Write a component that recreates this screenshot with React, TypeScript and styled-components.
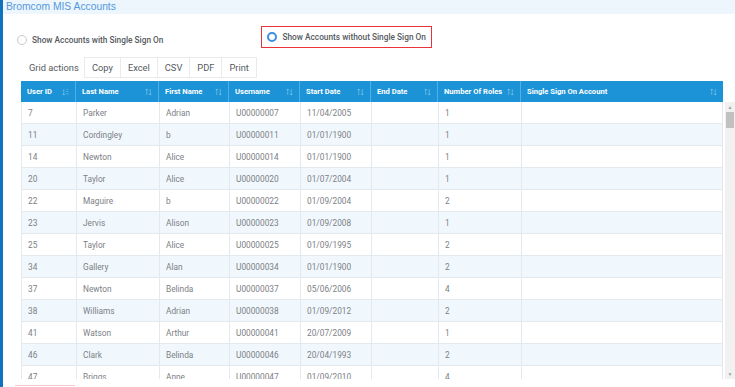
import React from 'react';
import styled, { createGlobalStyle } from 'styled-components';

const GlobalStyle = createGlobalStyle`
  html, body {
    margin: 0;
    padding: 0;
    background: #ffffff;
    font-family: Roboto, "Liberation Sans", Arial, sans-serif;
    overflow: hidden;
  }
`;

interface Account {
  id: number;
  lastName: string;
  firstName: string;
  username: string;
  startDate: string;
  endDate: string;
  roles: number;
  sso: string;
}

const accounts: Account[] = [
  { id: 7, lastName: 'Parker', firstName: 'Adrian', username: 'U00000007', startDate: '11/04/2005', endDate: '', roles: 1, sso: '' },
  { id: 11, lastName: 'Cordingley', firstName: 'b', username: 'U00000011', startDate: '01/01/1900', endDate: '', roles: 1, sso: '' },
  { id: 14, lastName: 'Newton', firstName: 'Alice', username: 'U00000014', startDate: '01/01/1900', endDate: '', roles: 1, sso: '' },
  { id: 20, lastName: 'Taylor', firstName: 'Alice', username: 'U00000020', startDate: '01/07/2004', endDate: '', roles: 1, sso: '' },
  { id: 22, lastName: 'Maguire', firstName: 'b', username: 'U00000022', startDate: '01/09/2004', endDate: '', roles: 2, sso: '' },
  { id: 23, lastName: 'Jervis', firstName: 'Alison', username: 'U00000023', startDate: '01/09/2008', endDate: '', roles: 1, sso: '' },
  { id: 25, lastName: 'Taylor', firstName: 'Alice', username: 'U00000025', startDate: '01/09/1995', endDate: '', roles: 2, sso: '' },
  { id: 34, lastName: 'Gallery', firstName: 'Alan', username: 'U00000034', startDate: '01/01/1900', endDate: '', roles: 2, sso: '' },
  { id: 37, lastName: 'Newton', firstName: 'Belinda', username: 'U00000037', startDate: '05/06/2006', endDate: '', roles: 4, sso: '' },
  { id: 38, lastName: 'Williams', firstName: 'Adrian', username: 'U00000038', startDate: '01/09/2012', endDate: '', roles: 2, sso: '' },
  { id: 41, lastName: 'Watson', firstName: 'Arthur', username: 'U00000041', startDate: '20/07/2009', endDate: '', roles: 1, sso: '' },
  { id: 46, lastName: 'Clark', firstName: 'Belinda', username: 'U00000046', startDate: '20/04/1993', endDate: '', roles: 2, sso: '' },
  { id: 47, lastName: 'Briggs', firstName: 'Anne', username: 'U00000047', startDate: '01/09/2010', endDate: '', roles: 4, sso: '' },
];

const columns = [
  { label: 'User ID', width: 55, sorted: true },
  { label: 'Last Name', width: 83 },
  { label: 'First Name', width: 70 },
  { label: 'Username', width: 71 },
  { label: 'Start Date', width: 71 },
  { label: 'End Date', width: 67 },
  { label: 'Number Of Roles', width: 83 },
  { label: 'Single Sign On Account', width: 202 },
];

const gridActions = ['Copy', 'Excel', 'CSV', 'PDF', 'Print'];

const SortIcon: React.FC<{ sorted?: boolean }> = ({ sorted }) => (
  <svg width="7" height="8" viewBox="0 0 8 8" fill="none" stroke="rgba(255,255,255,0.35)" strokeWidth="1">
    {sorted ? (
      <>
        <path d="M2 0.5v7M0.5 6l1.5 1.5L3.5 6" />
        <path d="M5 1h2M5 3.5h2M5 6h2.5" />
      </>
    ) : (
      <>
        <path d="M2 0.5v7M0.5 2l1.5-1.5L3.5 2" />
        <path d="M6 0.5v7M4.5 6l1.5 1.5L7.5 6" />
      </>
    )}
  </svg>
);

const App: React.FC = () => {
  return (
    <Page>
      <GlobalStyle />
      <SideBar />
      <Main>
        <TitleStrip>Bromcom MIS Accounts</TitleStrip>

        <RadioRow>
          <RadioOption>
            <RadioCircle />
            <RadioLabel>Show Accounts with Single Sign On</RadioLabel>
          </RadioOption>
          <RadioOption $highlighted>
            <RadioCircle $checked />
            <RadioLabel>Show Accounts without Single Sign On</RadioLabel>
          </RadioOption>
        </RadioRow>

        <ActionsBar>
          <ActionsLabel>Grid actions</ActionsLabel>
          <ActionGroup>
            {gridActions.map(action => (
              <ActionButton key={action}>{action}</ActionButton>
            ))}
          </ActionGroup>
        </ActionsBar>

        <Grid>
          <HeaderRow>
            {columns.map(col => (
              <HeaderCell key={col.label} style={{ width: col.width }}>
                <span>{col.label}</span>
                <SortIcon sorted={col.sorted} />
              </HeaderCell>
            ))}
          </HeaderRow>
          <BodyArea>
            <BodyRows>
              {accounts.map((acc, i) => (
                <Row key={acc.id} $striped={i % 2 === 1}>
                  {[acc.id, acc.lastName, acc.firstName, acc.username, acc.startDate, acc.endDate, acc.roles, acc.sso].map((value, c) => (
                    <Cell key={c} style={{ width: columns[c].width }}>{value}</Cell>
                  ))}
                </Row>
              ))}
            </BodyRows>
            <ScrollBar>
              <ScrollArrow>▲</ScrollArrow>
              <ScrollThumb />
              <ScrollTrack />
              <ScrollArrow>▼</ScrollArrow>
            </ScrollBar>
          </BodyArea>
        </Grid>

        <FooterHint />
      </Main>
    </Page>
  );
};

const Page = styled.div`
  display: flex;
  width: 735px;
  height: 387px;
  overflow: hidden;
  background: #ffffff;
`;

const SideBar = styled.div`
  width: 3px;
  flex-shrink: 0;
  background: #1172bd;
`;

const Main = styled.div`
  flex: 1;
  display: flex;
  flex-direction: column;
  min-width: 0;
`;

const TitleStrip = styled.div`
  height: 15px;
  line-height: 14px;
  padding-left: 3px;
  background: #eef6fd;
  color: #5199dc;
  font-size: 10.3px;
  font-family: "Liberation Sans", Arial, sans-serif;
`;

const RadioRow = styled.div`
  display: flex;
  align-items: center;
  height: 23px;
  margin-top: 12px;
  padding-left: 14px;
`;

const RadioOption = styled.div<{ $highlighted?: boolean }>`
  display: flex;
  align-items: center;
  gap: 5px;
  height: 22px;
  box-sizing: border-box;
  ${p => p.$highlighted
    ? `
    margin-left: 98px;
    padding: 0 5px 0 5px;
    border: 1.5px solid #e8333a;
  `
    : `
    padding-top: 5px;
  `}
`;

const RadioCircle = styled.span<{ $checked?: boolean }>`
  width: 10px;
  height: 10px;
  border-radius: 50%;
  box-sizing: border-box;
  background: #ffffff;
  border: ${p => (p.$checked ? '2.5px solid #3d8ee0' : '1px solid #c9c9c9')};
`;

const RadioLabel = styled.span`
  font-size: 8.3px;
  font-weight: 500;
  color: #555a60;
`;

const ActionsBar = styled.div`
  display: flex;
  align-items: center;
  margin-top: 9px;
  padding-left: 26px;
  height: 21px;
`;

const ActionsLabel = styled.span`
  font-size: 9.3px;
  color: #555a60;
  width: 55px;
`;

const ActionGroup = styled.div`
  display: flex;
  height: 21px;
  box-sizing: border-box;
  border: 1px solid #e8eaec;
  border-right: none;
`;

const ActionButton = styled.div`
  display: flex;
  align-items: center;
  padding: 0 7px;
  font-size: 9.3px;
  color: #555a60;
  border-right: 1px solid #e8eaec;
  background: #ffffff;
`;

const Grid = styled.div`
  display: flex;
  flex-direction: column;
  margin-top: 3px;
  padding-left: 18px;
`;

const HeaderRow = styled.div`
  display: flex;
  height: 21px;
  width: 702px;
  background: #1b93d6;
`;

const HeaderCell = styled.div`
  display: flex;
  align-items: center;
  justify-content: space-between;
  box-sizing: border-box;
  padding: 0 6px 0 6px;
  border-right: 1px solid #4fb0e4;
  color: #ffffff;
  font-size: 7.6px;
  font-weight: 700;
  white-space: nowrap;

  &:last-child {
    border-right: none;
  }
`;

const BodyArea = styled.div`
  display: flex;
  height: 277px;
  overflow: hidden;
`;

const BodyRows = styled.div`
  width: 702px;
  display: flex;
  flex-direction: column;
`;

const Row = styled.div<{ $striped: boolean }>`
  display: flex;
  flex-shrink: 0;
  height: 22px;
  box-sizing: border-box;
  border-bottom: 1px solid #e4e9ed;
  background: ${p => (p.$striped ? '#f1f8fd' : '#ffffff')};
`;

const Cell = styled.div`
  display: flex;
  align-items: center;
  box-sizing: border-box;
  padding-left: 6px;
  border-left: 1px solid #e4e9ed;
  color: #7c8085;
  font-size: 8.3px;
  white-space: nowrap;

  &:last-child {
    border-right: 1px solid #e4e9ed;
  }
`;

const ScrollBar = styled.div`
  width: 10px;
  margin-left: 2px;
  display: flex;
  flex-direction: column;
  background: #f1f1f1;
`;

const ScrollArrow = styled.div`
  height: 10px;
  font-size: 5px;
  line-height: 10px;
  text-align: center;
  color: #a3a3a3;
`;

const ScrollThumb = styled.div`
  height: 16px;
  margin: 0 1px;
  background: #c1c1c1;
`;

const ScrollTrack = styled.div`
  flex: 1;
`;

const FooterHint = styled.div`
  margin: 6px 0 0 12px;
  width: 60px;
  height: 4px;
  border-top: 1px solid #f6c9cc;
`;

export default App;
